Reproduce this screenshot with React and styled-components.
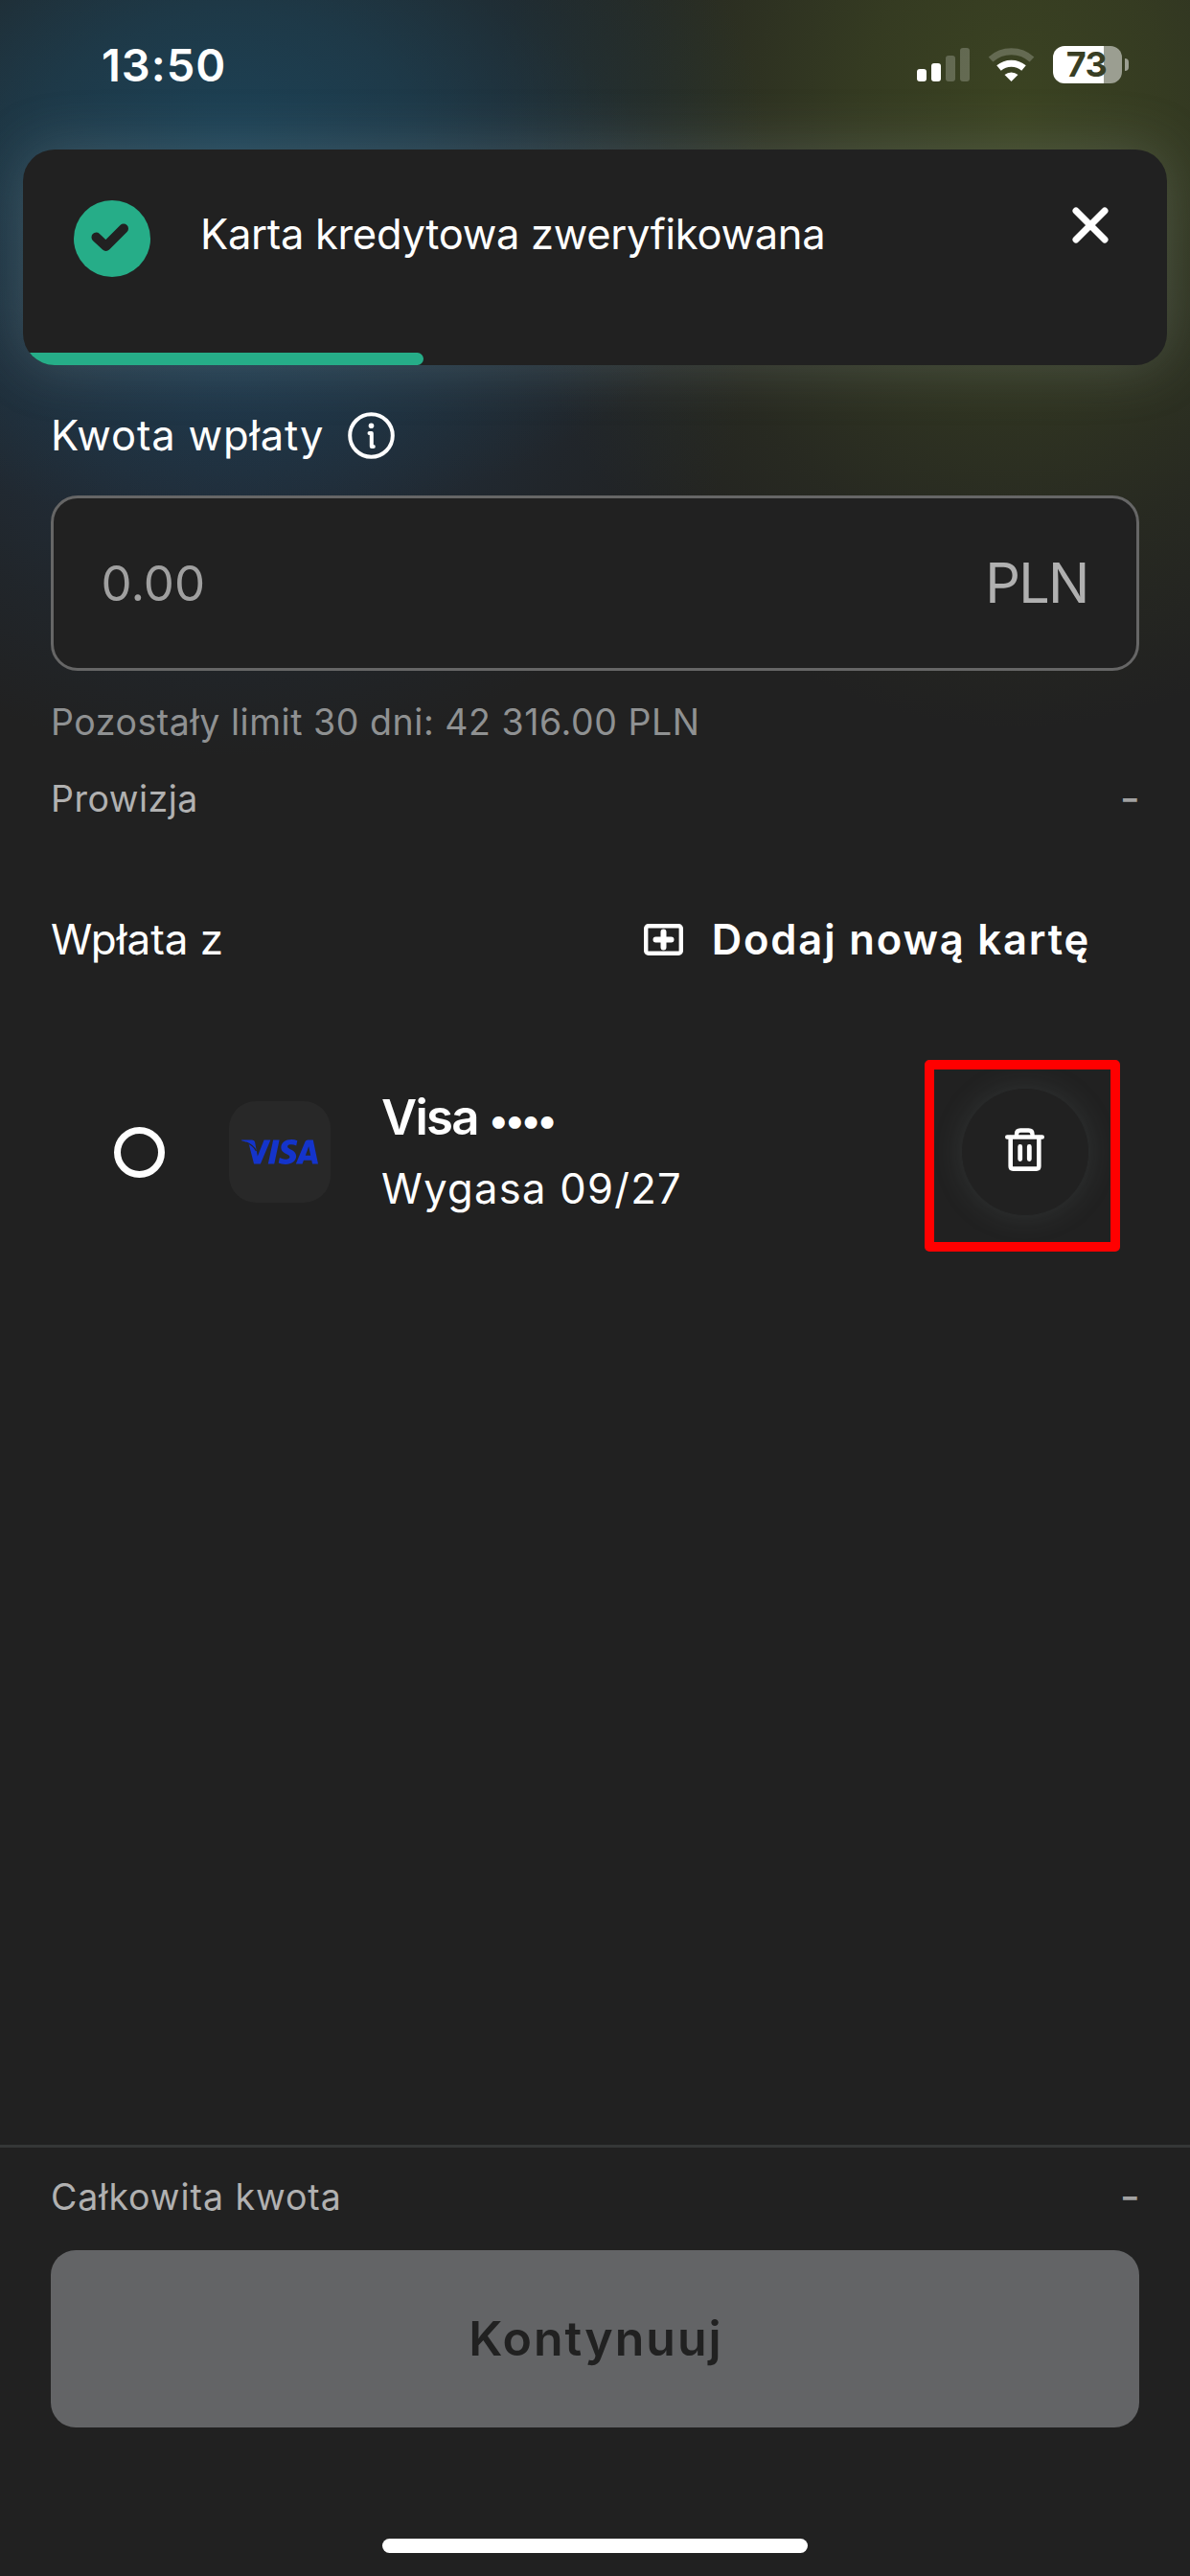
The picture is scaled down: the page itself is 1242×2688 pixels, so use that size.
import React from "react";
import styled, { createGlobalStyle } from "styled-components";
import { SiVisa } from "react-icons/si";

const Global = createGlobalStyle`
  *, *::before, *::after { box-sizing: border-box; }
  html, body { margin: 0; padding: 0; background: #212121; }
  body { font-family: Inter, "Liberation Sans", sans-serif; color: #fff; -webkit-font-smoothing: antialiased; }
`;

const Screen = styled.div`
  width: 1242px;
  height: 2688px;
  display: flex;
  flex-direction: column;
  overflow: hidden;
  background:
    radial-gradient(ellipse 560px 400px at 240px 150px, rgba(28, 70, 92, 0.85) 0%, rgba(28, 70, 92, 0.62) 35%, rgba(28, 70, 92, 0.25) 70%, rgba(28, 70, 92, 0) 100%),
    radial-gradient(ellipse 540px 420px at 240px 370px, rgba(32, 62, 92, 0.62) 0%, rgba(32, 62, 92, 0.42) 35%, rgba(32, 62, 92, 0.16) 70%, rgba(32, 62, 92, 0) 100%),
    radial-gradient(ellipse 540px 640px at 1060px 120px, rgba(66, 76, 34, 0.8) 0%, rgba(66, 76, 34, 0.6) 30%, rgba(66, 76, 34, 0.2) 70%, rgba(66, 76, 34, 0) 100%),
    #212121;
`;

const StatusBar = styled.header`
  height: 156px;
  flex: none;
  display: flex;
  justify-content: space-between;
  align-items: flex-start;
  padding: 38px 64px 0 106px;
`;

const Clock = styled.time`
  font-size: 47px;
  font-weight: 600;
  line-height: 60px;
  letter-spacing: 1px;
`;

const Indicators = styled.div`
  display: flex;
  align-items: flex-start;
  gap: 19px;
  margin-top: 10px;
`;

const Signal = styled.svg`
  width: 123px;
  height: 39px;
`;

const Battery = styled.div`
  display: flex;
  align-items: center;
  gap: 3px;
`;

const BatteryBody = styled.div`
  width: 72px;
  height: 39px;
  border-radius: 12px;
  background: linear-gradient(90deg, #fff 53px, #9b9e91 53px);
  color: #383e24;
  font-size: 36px;
  font-weight: 700;
  line-height: 39px;
  text-align: center;
  letter-spacing: -0.5px;
  padding-right: 2px;
`;

const BatteryCap = styled.div`
  width: 4px;
  height: 13px;
  border-radius: 0 7px 7px 0;
  background: #9b9e91;
`;

const Toast = styled.section`
  flex: none;
  display: flex;
  flex-direction: column;
  justify-content: space-between;
  height: 225px;
  margin: 0 24px;
  border-radius: 33px;
  background: #212121;
  overflow: hidden;
  box-shadow: 0 0 60px rgba(150, 165, 165, 0.28);
`;

const ToastBody = styled.div`
  display: flex;
  align-items: flex-start;
  padding: 53px 61px 0 53px;
`;

const StatusIcon = styled.svg`
  width: 80px;
  height: 80px;
  flex: none;
`;

const ToastMessage = styled.p`
  flex: 1;
  margin: 0 0 0 52px;
  font-size: 43.5px;
  line-height: 70px;
  font-weight: 400;
  letter-spacing: -0.31px;
  white-space: nowrap;
`;

const CloseButton = styled.button`
  display: flex;
  border: 0;
  padding: 7px 0 0;
  background: none;
  color: #fff;
`;

const Progress = styled.div`
  height: 13px;
  width: 418px;
  border-radius: 0 7px 7px 0;
  background: #26ad88;
`;

const Form = styled.main`
  flex: 1;
  display: flex;
  flex-direction: column;
  padding: 49px 53px 0;
`;

const FieldLabel = styled.div`
  display: flex;
  align-items: center;
  height: 49px;
  gap: 25px;
  font-size: 43.5px;
  line-height: 49px;
  letter-spacing: 0.83px;
`;

const AmountField = styled.div`
  display: flex;
  align-items: center;
  justify-content: space-between;
  height: 183px;
  margin-top: 38px;
  padding: 0 50.5px 0 49.5px;
  border: 3px solid #666666;
  border-radius: 28px;
  background: #212121;
`;

const Amount = styled.span`
  font-size: 51px;
  color: #a0a0a0;
`;

const Currency = styled.span`
  padding-bottom: 2px;
  font-size: 57.5px;
  color: #b0b0b0;
  letter-spacing: -1.8px;
`;

const Hint = styled.p`
  margin: 29px 0 0;
  font-size: 37.5px;
  line-height: 50px;
  color: #8f9192;
  white-space: nowrap;
  letter-spacing: 0.54px;
`;

const SummaryRow = styled.div`
  display: flex;
  justify-content: space-between;
  align-items: center;
  height: 50px;
  margin-top: ${(p) => p.$top}px;
  font-size: 37.5px;
  line-height: 50px;
  color: #b1b1b1;
  letter-spacing: ${(p) => p.$tracking}px;
`;

const Dash = styled.span`
  margin-right: -1px;
  padding-bottom: 3px;
  font-size: 46px;
  letter-spacing: 0;
  line-height: 45px;
  color: #a2a2a2;
`;

const SectionHead = styled.div`
  display: flex;
  justify-content: space-between;
  align-items: center;
  height: 60px;
  margin-top: 91px;
  padding-right: 51px;
`;

const SectionTitle = styled.h2`
  margin: 0;
  font-size: 44px;
  font-weight: 400;
`;

const AddCard = styled.button`
  display: flex;
  align-items: center;
  gap: 30px;
  border: 0;
  padding: 0;
  background: none;
  color: #fff;
  font: 600 43.5px/60px Inter, "Liberation Sans", sans-serif;
  letter-spacing: 1.85px;
`;

const CardRow = styled.div`
  display: flex;
  align-items: center;
  height: 148px;
  margin-top: 118px;
  padding: 0 53px 0 66px;
`;

const Radio = styled.span`
  width: 53px;
  height: 53px;
  border: 7px solid #fff;
  border-radius: 50%;
`;

const BrandTile = styled.div`
  display: flex;
  align-items: center;
  justify-content: center;
  width: 106px;
  height: 106px;
  margin-left: 67px;
  border-radius: 28px;
  background: #282828;
  color: #1434cb;
`;

const CardInfo = styled.div`
  flex: 1;
  margin: 2px 0 0 53px;
  display: flex;
  flex-direction: column;
`;

const CardName = styled.div`
  display: flex;
  align-items: center;
  gap: 11px;
  height: 74px;
  font-size: 51px;
  line-height: 74px;
  font-weight: 600;
  letter-spacing: -1.7px;
`;

const Mask = styled.span`
  padding-top: 3px;
  font-size: 41px;
  line-height: 66px;
  letter-spacing: -3.7px;
`;

const CardExpiry = styled.div`
  font-size: 43.5px;
  line-height: 74px;
  letter-spacing: 1.3px;
`;

const DeleteButton = styled.button`
  position: relative;
  display: flex;
  align-items: center;
  justify-content: center;
  width: 132px;
  height: 132px;
  padding: 0 2px 6px 0;
  border: 0;
  border-radius: 50%;
  background: #212121;
  color: #fff;
  box-shadow: 0 0 30px rgba(110, 125, 125, 0.22);
`;

const Highlight = styled.span`
  position: absolute;
  left: -39px;
  top: -30px;
  width: 204px;
  height: 200px;
  border: 10px solid #ff0000;
  border-radius: 5px;
`;

const Footer = styled.footer`
  flex: none;
  display: flex;
  flex-direction: column;
  height: 450px;
  padding: 0 53px;
  border-top: 3px solid #353737;
  background: #212121;
`;

const ContinueButton = styled.button`
  height: 185px;
  margin-top: 30px;
  padding: 0 0 2px 2px;
  border: 0;
  border-radius: 26px;
  background: #636466;
  color: #212121;
  font: 600 50px/60px Inter, "Liberation Sans", sans-serif;
  letter-spacing: 2px;
`;

const HomeIndicator = styled.div`
  width: 444px;
  height: 15px;
  margin: 116px auto 0;
  border-radius: 8px;
  background: #fff;
`;

function StatusIndicators() {
  return (
    <Indicators>
      <Signal viewBox="957 48 123 39">
        <g fill="#fff">
          <rect x="957" y="72" width="10" height="13" rx="3" />
          <rect x="972" y="66" width="10" height="19" rx="3" />
          <rect x="987" y="58" width="10" height="27" rx="3" opacity="0.22" />
          <rect x="1002" y="50" width="10" height="35" rx="3" opacity="0.22" />
        </g>
        <path d="M1034 62 a32 32 0 0 1 43 0" fill="none" stroke="#fff" strokeWidth="7" opacity="0.22" />
        <path d="M1042.500 71 a20 20 0 0 1 26 0" fill="none" stroke="#fff" strokeWidth="7" />
        <path d="M1048.500 78 a11 11 0 0 1 14 0 L1055.500 85 Z" fill="#fff" />
      </Signal>
      <Battery>
        <BatteryBody>73</BatteryBody>
        <BatteryCap />
      </Battery>
    </Indicators>
  );
}

export default function App() {
  return (
    <Screen>
      <Global />
      <StatusBar>
        <Clock>13:50</Clock>
        <StatusIndicators />
      </StatusBar>
      <Toast>
        <ToastBody>
          <StatusIcon viewBox="0 0 80 80">
            <circle cx="40" cy="40" r="40" fill="#26ad88" />
            <path d="M23.500 38.500 L33.500 48 L52 29.500" fill="none" stroke="#212121" strokeWidth="10" strokeLinecap="round" strokeLinejoin="round" />
          </StatusIcon>
          <ToastMessage>Karta kredytowa zweryfikowana</ToastMessage>
          <CloseButton aria-label="Zamknij">
            <svg width="38" height="38" viewBox="0 0 38 38" fill="none" stroke="currentColor" strokeWidth="7" strokeLinecap="round">
              <path d="M4 4 L34 34 M34 4 L4 34" />
            </svg>
          </CloseButton>
        </ToastBody>
        <Progress />
      </Toast>
      <Form>
        <FieldLabel>
          <span>Kwota wpłaty</span>
          <svg width="49" height="49" viewBox="0 0 49 49" fill="none" stroke="#fff">
            <circle cx="24.500" cy="24.500" r="22.300" strokeWidth="4" />
            <circle cx="24.500" cy="14.200" r="2.800" fill="#fff" stroke="none" />
            <path d="M22.500 22 H24.800 V36 H26.800" strokeWidth="4" strokeLinecap="round" strokeLinejoin="round" />
          </svg>
        </FieldLabel>
        <AmountField>
          <Amount>0.00</Amount>
          <Currency>PLN</Currency>
        </AmountField>
        <Hint>Pozostały limit 30 dni: 42 316.00 PLN</Hint>
        <SummaryRow $top={30} $tracking={0.5}>
          <span>Prowizja</span>
          <Dash>-</Dash>
        </SummaryRow>
        <SectionHead>
          <SectionTitle>Wpłata z</SectionTitle>
          <AddCard>
            <svg width="41" height="33" viewBox="0 0 41 33" fill="none" stroke="currentColor">
              <rect x="2.200" y="2.200" width="36.600" height="28.600" rx="2.500" strokeWidth="4.400" />
              <path d="M20.500 8.500 V24.500 M12.500 16.500 H28.500" strokeWidth="6" strokeLinecap="round" />
            </svg>
            <span>Dodaj nową kartę</span>
          </AddCard>
        </SectionHead>
        <CardRow>
          <Radio />
          <BrandTile>
            <svg width="80" height="80" viewBox="0 0 80 80">
              <SiVisa size={80} />
              <path d="M5 30 Q12.500 33 15.500 39" fill="none" stroke="#282828" strokeWidth="1.300" />
            </svg>
          </BrandTile>
          <CardInfo>
            <CardName>
              <span>Visa</span>
              <Mask>••••</Mask>
            </CardName>
            <CardExpiry>Wygasa 09/27</CardExpiry>
          </CardInfo>
          <DeleteButton aria-label="Usuń kartę">
            <svg width="41" height="45" viewBox="0 0 41 45" fill="none" stroke="currentColor" strokeLinecap="round" strokeLinejoin="round">
              <path d="M2.200 9.500 H38.800 M12 9 V6.500 Q12 2.500 16 2.500 H24.500 Q28.500 2.500 28.500 6.500 V9" strokeWidth="4.400" />
              <path d="M5.700 10 V40 Q5.700 42.600 8.300 42.600 H32.700 Q35.300 42.600 35.300 40 V10" strokeWidth="4.600" />
              <path d="M15.700 19.500 V32.500 M25.300 19.500 V32.500" strokeWidth="4.800" />
            </svg>
            <Highlight />
          </DeleteButton>
        </CardRow>
      </Form>
      <Footer>
        <SummaryRow $top={27} $tracking={0.95}>
          <span>Całkowita kwota</span>
          <Dash>-</Dash>
        </SummaryRow>
        <ContinueButton>Kontynuuj</ContinueButton>
        <HomeIndicator />
      </Footer>
    </Screen>
  );
}
